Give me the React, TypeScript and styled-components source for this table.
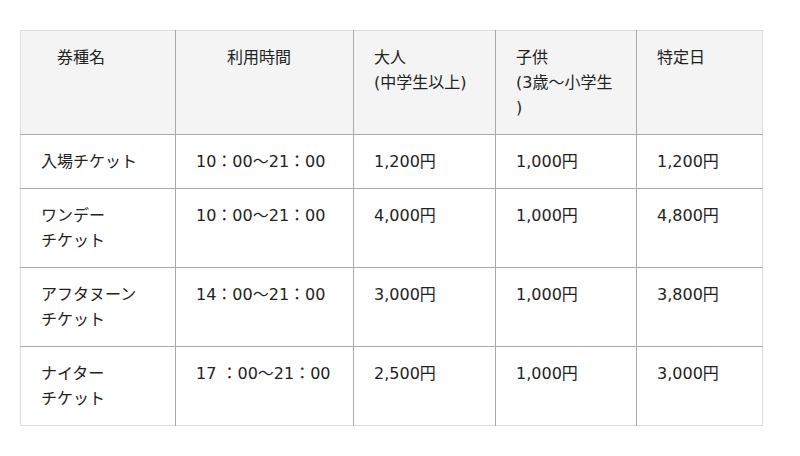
import React from 'react';
import styled, { createGlobalStyle } from 'styled-components';

const GlobalStyle = createGlobalStyle`
  body {
    margin: 0;
    background: #ffffff;
    font-family: "DejaVu Sans", "Noto Sans CJK JP", sans-serif;
    color: #222222;
  }
`;

const Page = styled.div`
  padding: 30px 20px;
`;

const Table = styled.table`
  width: 742px;
  border-collapse: collapse;
  table-layout: fixed;
  border: 1px solid #dddddd;
  font-size: 16px;
  line-height: 25px;
`;

const HeadCell = styled.th<{ $indent?: number }>`
  background: #f4f4f4;
  font-weight: normal;
  text-align: left;
  vertical-align: top;
  padding: 14px 12px 14px ${({ $indent }) => $indent ?? 20}px;
  border-left: 1px solid #aaaaaa;
  border-bottom: 1px solid #aaaaaa;
  &:first-child { border-left: none; }
`;

const Cell = styled.td`
  vertical-align: top;
  padding: 14px 12px 14px 20px;
  border-left: 1px solid #aaaaaa;
  border-top: 1px solid #aaaaaa;
  &:first-child { border-left: none; }
`;

interface Ticket {
  name: string[];
  time: string;
  adult: string;
  child: string;
  special: string;
}

const tickets: Ticket[] = [
  { name: ['入場チケット'], time: '10：00〜21：00', adult: '1,200円', child: '1,000円', special: '1,200円' },
  { name: ['ワンデー', 'チケット'], time: '10：00〜21：00', adult: '4,000円', child: '1,000円', special: '4,800円' },
  { name: ['アフタヌーン', 'チケット'], time: '14：00〜21：00', adult: '3,000円', child: '1,000円', special: '3,800円' },
  { name: ['ナイター', 'チケット'], time: '17 ：00〜21：00', adult: '2,500円', child: '1,000円', special: '3,000円' },
];

export default function App(): JSX.Element {
  return (
    <Page>
      <GlobalStyle />
      <Table>
        <colgroup>
          <col style={{ width: 155 }} />
          <col style={{ width: 178 }} />
          <col style={{ width: 142 }} />
          <col style={{ width: 141 }} />
          <col style={{ width: 126 }} />
        </colgroup>
        <thead>
          <tr>
            <HeadCell $indent={36}>券種名</HeadCell>
            <HeadCell $indent={51}>利用時間</HeadCell>
            <HeadCell>大人<br />(中学生以上)</HeadCell>
            <HeadCell>子供<br />(3歳〜小学生<br />)</HeadCell>
            <HeadCell>特定日</HeadCell>
          </tr>
        </thead>
        <tbody>
          {tickets.map((t) => (
            <tr key={t.name.join('')}>
              <Cell>
                {t.name.map((line, i) => (
                  <React.Fragment key={line}>
                    {i > 0 && <br />}
                    {line}
                  </React.Fragment>
                ))}
              </Cell>
              <Cell>{t.time}</Cell>
              <Cell>{t.adult}</Cell>
              <Cell>{t.child}</Cell>
              <Cell>{t.special}</Cell>
            </tr>
          ))}
        </tbody>
      </Table>
    </Page>
  );
}
